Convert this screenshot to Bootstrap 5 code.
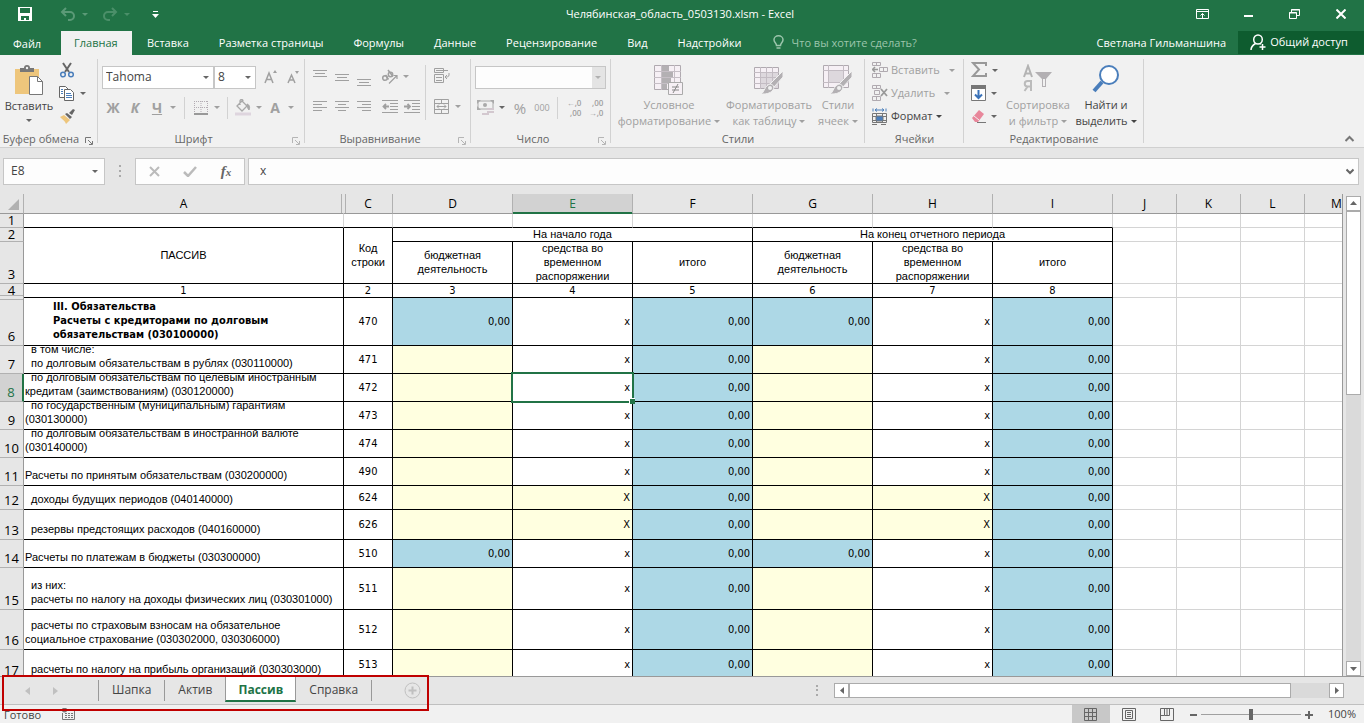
<!DOCTYPE html>
<html lang="ru">
<head>
<meta charset="utf-8">
<meta name="viewport" content="width=device-width, initial-scale=1">
<title>Челябинская_область_0503130.xlsm - Excel</title>
<link href="https://cdn.jsdelivr.net/npm/bootstrap@5.3.0/dist/css/bootstrap.min.css" rel="stylesheet">
<style>
:root{--xl:#217346;--line:#d4d4d4;--chrome:#e6e6e6;--rib:#f1f1f1}
body{font:11px/16px "Open Sans","Noto Sans",sans-serif;background:var(--chrome);color:#444;height:100vh;overflow:hidden}
button{border:0;background:none;padding:0;color:inherit;font:inherit}
svg{display:block;flex:none}
.titlebar{height:31px;background:var(--xl);color:#fff;padding-bottom:2px}
.quick{width:180px;padding-left:18px}
.winbtn{width:46px;height:28px;display:grid;place-items:center}
.menubar{background:var(--xl);height:24px;color:#fff}
.menubar .tab{color:#fff;text-decoration:none;padding:0 15px;line-height:24px;font-size:11px}
.menubar .tab.file{width:61px;padding:0 14px 0 13px;line-height:26px}
.menubar .tab.on{background:var(--rib);color:var(--xl);padding:0 13px;width:71px;white-space:nowrap}
.menubar input{background:none;border:0;outline:0;color:#fff;width:150px;font:inherit;padding:0}
.menubar input::placeholder{color:#9cc5ac;opacity:1}
.share{background:#0e5c2f;color:#fff;width:126px;height:23px}
.ribbon{background:var(--rib);height:93px;border-bottom:1px solid #d0d0d0}
.grp{position:relative;flex:none}
.grp::after{content:"";position:absolute;right:0;top:4px;height:84px;border-right:1px solid #d2d2d2}
.grp-name{height:16px;line-height:16px;text-align:center;color:#666;position:relative}
.grp-name button{position:absolute;right:5px;top:6px}
.w1{width:98px}.w2{width:207px}.w3{width:166px}.w4{width:140px}.w5{width:254px}.w6{width:99px}.w7{width:180px}
.body-row{height:76px}
.b{width:22px;height:22px;display:grid;place-items:center;flex:none}
.b26{width:26px}.b18{width:18px}
.dd{width:10px;height:22px;display:grid;place-items:center;flex:none;color:#666}
.off .dd,.titlebar .dd{color:inherit}
.dd::before,.car::after{content:"";border:3px solid transparent;border-top-color:currentColor;border-bottom:0;display:inline-block}
.car::after{margin-left:3px;vertical-align:2px}
.dark{color:#666!important}
.vs{width:12px;height:22px;flex:none;background:linear-gradient(#d2d2d2,#d2d2d2) center/1px 100% no-repeat}
.off{color:#a0a0a0}
.glyph{font-size:14px;font-weight:700;line-height:20px}
.dec{font-size:8px;line-height:10px;font-weight:600;text-align:right}
.big{text-align:center;padding-top:7px;white-space:nowrap;line-height:16px;height:76px}
.big svg{margin:0 auto 1px}
.sel{appearance:none;height:23px;border:1px solid #c6c6c6;border-radius:0;padding:0 0 0 3px;font:12px/20px "Open Sans",sans-serif;color:#444;background:#fff url("data:image/svg+xml,%3Csvg xmlns='http://www.w3.org/2000/svg' width='6' height='3'%3E%3Cpath d='M0 0h6L3 3z' fill='%23666'/%3E%3C/svg%3E") right 4px center no-repeat}
.sel:disabled{opacity:1;background:url("data:image/svg+xml,%3Csvg xmlns='http://www.w3.org/2000/svg' width='6' height='3'%3E%3Cpath d='M0 0h6L3 3z' fill='%23b0b0b0'/%3E%3C/svg%3E") right 4px center no-repeat,linear-gradient(#e4e4e4,#e4e4e4) right/13px 100% no-repeat,#fdfdfd}
.small-btn{height:23px;display:flex;align-items:center;gap:3px;white-space:nowrap}
.small-btn .car::after{margin-left:4px}
.fbar{height:46px;padding:10px 5px 9px 3px}
.fbox{background:#fdfdfd;border:1px solid #c6c6c6;height:27px}
.fbox input{border:0;outline:0;background:none;font:12px/20px "Open Sans",sans-serif;color:#444;min-width:0;padding:0}
.dots{margin-right:13px;margin-left:14px}
.sheetwrap{min-height:0}
.sheet{background:#fff;overflow:hidden;border-right:1px solid #999}
.cells{border-collapse:separate;border-spacing:0;table-layout:fixed;width:100%;min-width:1369px;color:#000;font:11px/14px "Liberation Sans",Arial,sans-serif}
.cells td{padding:0;border-right:1px solid var(--line);border-bottom:1px solid var(--line);white-space:nowrap;vertical-align:middle;text-align:center;font-size:11px;line-height:14px}
.cells thead th{height:20px;background:var(--chrome);border-right:1px solid #b1b1b1;border-bottom:1px solid #999;padding:2px 0 0;text-align:center;font:12px/16px "Open Sans",sans-serif;position:relative}
.cells thead th.cA{border-right-color:transparent}
.cells thead th.cC::before{content:"";position:absolute;left:-3px;width:5px;top:0;bottom:0;border:solid #b1b1b1;border-width:0 1px}
.cells thead th.on{background:#d2d2d2;color:var(--xl);border-bottom-color:var(--xl);box-shadow:inset 0 -1px var(--xl)}
.cells tbody th{background:var(--chrome);border-right:1px solid #999;border-bottom:1px solid #b1b1b1;padding:0;text-align:center;vertical-align:bottom;font:13px/13px "Open Sans",sans-serif;position:relative}
.cells tbody tr.tall th{padding-bottom:2px}
.cells tbody th.on{background:#d2d2d2;color:var(--xl);border-right:2px solid var(--xl)}
.cells .hid::before{content:"";position:absolute;left:0;right:0;top:-3px;height:5px;background:var(--chrome);border:solid #b1b1b1;border-width:1px 0}
.cells td.k{border-color:#000}
.cells td.u{border-bottom-color:#000}
.h14{height:14px}.h24{height:24px}.h28{height:28px}.h30{height:30px}.h40{height:40px}.h42{height:42px}.h48{height:48px}
.h14 td{line-height:13px}
.cells .n,.cells .r{font-family:"DejaVu Sans Condensed","DejaVu Sans",sans-serif}
.cells .r{text-align:right;padding-right:2px}
.tall .n,.tall .r{padding-top:2px}
.cells .bl{background:#add8e6}.cells .ye{background:#ffffe0}
.cells .txt{text-align:left}
.cells .two{line-height:14px}
.clip{overflow:hidden;display:flex;flex-direction:column;justify-content:flex-end;padding:0 0 3px 1px}
.clip.in{padding-left:7px}
.clip .ind{padding-left:6px}
.h24 .clip{height:23px}.h28 .clip{height:27px}.h30 .clip{height:29px}.h40 .clip{height:39px}.h42 .clip{height:41px}.h48 .clip{height:47px}
.clip.hd{padding:0;justify-content:center}
.clip.bold{font:bold 11px/14px "DejaVu Sans Condensed","DejaVu Sans",sans-serif;padding-left:29px}
.cells td.cur{position:relative}
.cur::before{content:"";position:absolute;left:-2px;top:-2px;right:-2px;bottom:-2px;border:2px solid var(--xl)}
.cur::after{content:"";position:absolute;right:-3px;bottom:-3px;width:6px;height:6px;background:var(--xl);border:solid #fff;border-width:1px 0 0 1px}
.vscroll{width:21px;padding:2px 3px 0 3px}
.sb{border:1px solid #ababab;background:#fff;width:15px;height:15px;display:grid;place-items:center;flex:none;color:#666}
.track{background:#dadada}
.thumb{background:#fff;border:1px solid #ababab}
.vthumb{height:41%}
.tabs{height:29px;border-top:1px solid #999;border-bottom:1px solid #c0c0c0;position:relative}
.tabs .st{font-size:12px;line-height:20px;color:#444;padding:0 13px;text-decoration:none;margin-top:3px;height:21px}
.tabs .bar{border-left:1px solid #999}
.tabs .on{background:#fff;color:var(--xl);font-weight:700;border:solid #999;border-width:0 1px;border-bottom:2px solid var(--xl);margin-top:-1px;height:26px;line-height:27px;width:71px;padding:0;text-align:center}
.mark-box{position:absolute;left:2px;top:-2px;width:427px;height:36px;border:2px solid #c00000;pointer-events:none}
.hscroll{width:510px;height:15px;margin:6px 20px 0 0}
.hthumb{width:92%}
.status{background:var(--rib);height:18px;color:#444}
.ready{width:62px;padding-left:4px;padding-top:2px}
.view{width:38px;display:grid;place-items:center;height:18px;color:#666}
.view.on{background:#c8c8c8}
.zoomer{appearance:none;width:100px;height:12px;background:linear-gradient(#a0a0a0,#a0a0a0) center/100% 1px no-repeat;margin:0}
.zoomer::-webkit-slider-thumb{appearance:none;width:4px;height:11px;background:#666}
</style>
</head>
<body class="d-flex flex-column">

<header class="titlebar d-flex align-items-center justify-content-between">
  <div class="quick d-flex align-items-center">
    <button aria-label="Сохранить"><svg width="14" height="14" viewBox="0 0 14 14"><path d="M0 0h14v14H0z" fill="#fff"/><path d="M2 1h10v5H2zM3 9h8v4H8v-2H6v2H3z" fill="#217346"/></svg></button>
    <button aria-label="Отменить" style="color:#5b9a77" class="d-flex align-items-center ms-4 ps-1"><svg width="16" height="14" fill="none" stroke="currentColor" stroke-width="2"><path d="M6 1L2 5l4 4M2 5h8a4 4 0 0 1 0 8H8"/></svg><span class="dd ms-1"></span></button>
    <button aria-label="Повторить" style="color:#4b8f69" class="d-flex align-items-center ms-2 ps-1"><svg width="16" height="14" fill="none" stroke="currentColor" stroke-width="2"><path d="M10 1l4 4-4 4M14 5H6a4 4 0 0 0 0 8h2"/></svg><span class="dd ms-1"></span></button>
    <button aria-label="Настройка" class="ms-3 ps-1"><svg width="7" height="7"><path d="M1 0h5v1H1zM0 3h7L3.500 7z" fill="#fff"/></svg></button>
  </div>
  <span class="text-nowrap">Челябинская_область_0503130.xlsm - Excel</span>
  <div class="d-flex">
    <button class="winbtn" aria-label="Параметры ленты"><svg width="13" height="10" fill="none" stroke="#fff"><path d="M.5.500h12v9H.5zM.5 2.500h12M6.500 9V4.500M4.500 6.500l2-2 2 2"/></svg></button>
    <button class="winbtn" aria-label="Свернуть"><svg width="10" height="8"><path d="M0 5h9v2H0z" fill="#fff"/></svg></button>
    <button class="winbtn" aria-label="Развернуть"><svg width="11" height="10" fill="none" stroke="#fff"><path d="M2.500 3V.5h8v6H8M2 1h9"/><path d="M.5 3.500h7v6h-7zM0 4h8"/></svg></button>
    <button class="winbtn" aria-label="Закрыть"><svg width="10" height="10" stroke="#fff" stroke-width="2"><path d="M.5.5l9 9M9.500.5l-9 9"/></svg></button>
  </div>
</header>

<nav class="menubar d-flex">
  <a href="#" class="tab file">Файл</a><a href="#" class="tab on">Главная</a><a href="#" class="tab">Вставка</a><a href="#" class="tab">Разметка страницы</a><a href="#" class="tab">Формулы</a><a href="#" class="tab">Данные</a><a href="#" class="tab">Рецензирование</a><a href="#" class="tab">Вид</a><a href="#" class="tab">Надстройки</a>
  <label class="d-flex align-items-center gap-2 ps-3"><svg width="11" height="15" fill="none" stroke="#9cc5ac" stroke-width="1.500"><path d="M3.500 10.500C3.500 8 1 7.500 1 4.800a4.500 4 0 0 1 9 0C10 7.500 7.500 8 7.500 10.500zM3.500 13h4"/></svg><input placeholder="Что вы хотите сделать?" aria-label="Что вы хотите сделать?"></label>
  <div class="ms-auto d-flex">
    <button class="me-2 pe-1 text-nowrap">Светлана Гильманшина</button>
    <button class="share d-flex align-items-center justify-content-center gap-1 pe-1 text-nowrap"><svg width="16" height="17" fill="none" stroke="#fff" stroke-width="1.500"><ellipse cx="8" cy="5.500" rx="4.300" ry="4.500"/><path d="M1 16c0-3 2-5 4.500-6.500M10 9.500l1 .7M12.500 10v6M9.500 13h6"/></svg>Общий доступ</button>
  </div>
</nav>

<section class="ribbon d-flex">
  <div class="grp w1">
    <div class="body-row d-flex">
      <button class="big" style="width:58px"><svg width="30" height="32"><path d="M1 4h24v25H1z" fill="#eec67c"/><path d="M6 7V3h4a3 3 0 0 1 6 0h4v4z" fill="#777"/><circle cx="13" cy="3" r="1.200" fill="#f1f1f1"/><path d="M15.500 11.500h8l5 5v13h-13z" fill="#fff" stroke="#777"/><path d="M23.500 11.500v5h5" fill="none" stroke="#777"/></svg>Вставить<span class="dd dark mx-auto" style="height:14px"></span></button>
      <div class="pt-1" style="padding-left:1px">
        <button class="small-btn" aria-label="Вырезать"><svg width="16" height="17" fill="none"><path d="M4 1l6 9M12 1L6 10" stroke="#666" stroke-width="2"/><circle cx="4" cy="12.500" r="2.300" stroke="#4a7ebb" stroke-width="1.500"/><circle cx="12" cy="12.500" r="2.300" stroke="#4a7ebb" stroke-width="1.500"/></svg></button>
        <button class="small-btn" aria-label="Копировать"><svg width="16" height="15" fill="#fff" stroke="#666"><path d="M.5.500h6l3 3v8h-9z"/><path d="M5.500 3.500h6l3 3v8h-9z"/><path d="M2 3.500h2M2 5.500h2M2 7.500h2M7 7.500h5M7 9.500h6M7 11.500h6" stroke="#4a7ebb"/></svg><span class="dd"></span></button>
        <button class="small-btn" aria-label="Формат по образцу"><svg width="16" height="15"><path d="M1 8l4-2 6 5-4 4c-1-3-3-4-6-7z" fill="#eec67c"/><path d="M6 5l2-1 5 4-2 2zM10 4l4-4 2 1-3 5z" fill="#666"/></svg></button>
      </div>
    </div>
    <div class="grp-name pe-3">Буфер обмена<button aria-label="Буфер обмена: параметры"><svg width="8" height="8" fill="none" stroke="#777"><path d="M.5 6V.5H6M3 3l4 4M7.500 4v3.500H4"/></svg></button></div>
  </div>

  <div class="grp w2">
    <div class="body-row ps-1">
      <div class="d-flex align-items-center" style="padding-top:11px">
        <select class="sel" style="width:112px" aria-label="Шрифт"><option>Tahoma</option></select><select class="sel" style="width:42px" aria-label="Размер"><option>8</option></select>
        <button class="b off ms-1" aria-label="Увеличить шрифт"><svg width="14" height="14" fill="none" stroke="currentColor" stroke-width="1.500"><path d="M1 13L5 3l4 10M2.500 9.500h5"/><path d="M9 3l2-3 2 3z" fill="currentColor" stroke="none"/></svg></button>
        <button class="b off" aria-label="Уменьшить шрифт"><svg width="14" height="14" fill="none" stroke="currentColor" stroke-width="1.500"><path d="M2 13l3.500-8L9 13M3.500 10h4"/><path d="M9 1h4l-2 3z" fill="currentColor" stroke="none"/></svg></button>
      </div>
      <div class="d-flex align-items-center off pt-2">
        <button class="b glyph">Ж</button><button class="b glyph fst-italic">К</button><button class="b glyph text-decoration-underline">Ч</button><span class="dd"></span><span class="vs"></span>
        <button class="b" aria-label="Границы"><svg width="14" height="14" fill="none" stroke="#b3acb3"><path d="M.5 0v12M13.500 0v12M7 0v12M0 .5h14M0 6.500h14" stroke-dasharray="1 1"/><path d="M0 13h14" stroke="#999" stroke-width="2"/></svg></button><span class="dd"></span><span class="vs" style="width:10px"></span>
        <button class="b" aria-label="Заливка"><svg width="16" height="17" fill="none" stroke="#a8a8a8"><path d="M2 7l5-5 5 5-5 5zM5 6V2a1.500 1.500 0 0 1 3 0" stroke-width="1.300"/><path d="M12 5c3 1 3 4 2 6-1-1-2-3-2-6z" fill="#a8a8a8"/><path d="M0 15h16" stroke="#ded5de" stroke-width="3"/></svg></button><span class="dd"></span>
        <button class="b glyph">А</button><span class="dd"></span>
      </div>
    </div>
    <div class="grp-name pe-3">Шрифт<button aria-label="Шрифт: параметры"><svg width="8" height="8" fill="none" stroke="#b5b5b5"><path d="M.5 6V.5H6M3 3l4 4M7.500 4v3.500H4"/></svg></button></div>
  </div>

  <div class="grp w3">
    <div class="body-row d-flex off ps-1">
      <div>
        <div class="d-flex" style="padding-top:11px">
          <button class="b" aria-label="По верхнему краю"><svg width="14" height="18" stroke="currentColor"><path d="M0 2.500h14M2 5.500h10M0 8.500h14" /></svg></button>
          <button class="b" aria-label="По середине"><svg width="14" height="18" stroke="currentColor"><path d="M0 6.500h14M2 9.500h10M0 12.500h14"/></svg></button>
          <button class="b" aria-label="По нижнему краю"><svg width="14" height="18" stroke="currentColor"><path d="M0 11.500h14M2 14.500h10M0 17.500h14"/></svg></button>
          <button class="b ms-1" aria-label="Ориентация"><svg width="18" height="16" fill="none" stroke="currentColor" stroke-width="1.500"><circle cx="4" cy="9" r="2.300"/><path d="M4.500 6l3 4.500M7 1l5 6.500"/><circle cx="9.500" cy="5.500" r="2.200"/><path d="M8 14.500l8-8M12.500 6.500H16V10" stroke-width="1.200"/></svg></button><span class="dd"></span>
        </div>
        <div class="d-flex pt-2">
          <button class="b" aria-label="По левому краю"><svg width="14" height="12" stroke="currentColor"><path d="M0 .5h14M0 3.500h9M0 6.500h14M0 9.500h9"/></svg></button>
          <button class="b" aria-label="По центру"><svg width="14" height="12" stroke="currentColor"><path d="M0 .5h14M3 3.500h8M0 6.500h14M3 9.500h8"/></svg></button>
          <button class="b" aria-label="По правому краю"><svg width="14" height="12" stroke="currentColor"><path d="M0 .5h14M5 3.500h9M0 6.500h14M5 9.500h9"/></svg></button>
          <button class="b ms-1" aria-label="Уменьшить отступ"><svg width="16" height="13" stroke="currentColor"><path d="M0 .5h16M8 3.500h8M8 6.500h8M8 9.500h8M0 12.500h16"/><path d="M2 6.500h5M4 4L1.500 6.500 4 9" fill="none" stroke-width="1.800"/></svg></button>
          <button class="b" aria-label="Увеличить отступ"><svg width="16" height="13" stroke="currentColor"><path d="M0 .5h16M8 3.500h8M8 6.500h8M8 9.500h8M0 12.500h16"/><path d="M0 6.500h5M3.500 4L6 6.500 3.500 9" fill="none" stroke-width="1.800"/></svg></button>
        </div>
      </div>
      <span class="vs" style="width:4px;height:55px;margin-top:10px"></span>
      <div class="ps-1">
        <button class="b" style="margin-top:10px" aria-label="Перенести текст"><svg width="16" height="16" fill="none" stroke="currentColor"><path d="M.5.500h9v4h-9zM2 2.500h12M.5 6.500h9v8h-9zM2 9.500h6M2 12.500h6M15 5v2c0 2-2 2-4 2M13 7l-2 2 2 2"/></svg></button>
        <div class="d-flex" style="padding-top:9px"><button class="b" aria-label="Объединить"><svg width="16" height="15" fill="none" stroke="currentColor"><path d="M.5.500h14v14H.5zM.5 4.500h14M.5 10.500h14M7.500.5v4M7.500 10.500v4M3 7.500h9M5 5.500l-2 2 2 2M10 5.500l2 2-2 2"/></svg></button><span class="dd"></span></div>
      </div>
    </div>
    <div class="grp-name pe-3">Выравнивание<button aria-label="Выравнивание: параметры"><svg width="8" height="8" fill="none" stroke="#b5b5b5"><path d="M.5 6V.5H6M3 3l4 4M7.500 4v3.500H4"/></svg></button></div>
  </div>

  <div class="grp w4">
    <div class="body-row off ps-1">
      <div style="padding-top:11px"><select class="sel d-block" style="width:131px" disabled aria-label="Числовой формат"><option></option></select></div>
      <div class="d-flex align-items-center pt-2">
        <button class="b" aria-label="Денежный формат"><svg width="18" height="16"><path d="M1 1h15v8H1z" fill="none" stroke="#aaa"/><circle cx="8" cy="5" r="2" fill="#aaa"/><path d="M0 0h4L0 4zM17 0h-4l4 4zM0 10h4L0 6z" fill="#aaa"/><path d="M10 8h7v2h-7zM10 11h7v2h-7zM5 13h7v2H5z" fill="#d3c8cf"/></svg></button><span class="dd dark"></span>
        <button class="b b26" style="font-size:15px">%</button><button class="b b18" style="font-size:9px">000</button><span class="vs"></span>
        <button class="b dec"><span>←,0<br>,00</span></button><button class="b dec"><span>,00<br>→,0</span></button>
      </div>
    </div>
    <div class="grp-name pe-3">Число<button aria-label="Число: параметры"><svg width="8" height="8" fill="none" stroke="#b5b5b5"><path d="M.5 6V.5H6M3 3l4 4M7.500 4v3.500H4"/></svg></button></div>
  </div>

  <div class="grp w5">
    <div class="body-row d-flex off ps-1">
      <button class="big" style="width:108px"><svg width="30" height="32"><path d="M.5 1.500h26v24H.5z" fill="#f6f0f5" stroke="#b0aab0"/><path d="M0 7.500h27M0 13.500h27M0 19.500h27M7.500 1v25M20.500 1v25" stroke="#c6bfc6"/><path d="M8 2h7v5H8zM8 8h11v5H8zM8 14h9v5H8zM8 20h5v5H8z" fill="#b3b0b3"/><path d="M14.500 18.500h14v12h-14z" fill="#f6f0f5" stroke="#aaa"/><path d="M18 23h7M18 26h7M24 20l-5 9" stroke="#888"/></svg>Условное<br><span class="car">форматирование</span></button>
      <button class="big" style="width:92px"><svg width="30" height="32"><path d="M.5 3.500h24v21H.5z" fill="#f6f0f5" stroke="#b0aab0"/><path d="M7 9h17v15H7z" fill="#ddd8dd"/><path d="M0 8.500h25M0 13.500h25M0 19.500h25M6.500 3v22M12.500 3v22M18.500 3v22" stroke="#c3bcc3"/><path d="M29 7v6l-9 10-4-3z" fill="#b3b0b3" stroke="#f1f1f1"/><path d="M16 20c3 0 5 3 3 6-3 4-8 4-12 4 4-2 3-8 9-10z" fill="#b3b0b3" stroke="#f1f1f1"/><circle cx="16" cy="24" r="2" fill="#f1f1f1"/></svg>Форматировать<br><span class="car">как таблицу</span></button>
      <button class="big" style="width:46px"><svg width="30" height="32"><path d="M.5 1.500h25v22H.5z" fill="#f6f0f5" stroke="#b0aab0"/><path d="M6 7h14v11H6z" fill="#ddd8dd"/><path d="M0 6.500h26M0 18.500h26M5.500 1v23M20.500 1v23" stroke="#c3bcc3"/><path d="M29 7v6l-9 10-4-3z" fill="#b3b0b3" stroke="#f1f1f1"/><path d="M16 20c3 0 5 3 3 6-3 4-8 4-12 4 4-2 3-8 9-10z" fill="#b3b0b3" stroke="#f1f1f1"/><circle cx="16" cy="24" r="2" fill="#f1f1f1"/></svg>Стили<br><span class="car">ячеек</span></button>
    </div>
    <div class="grp-name">Стили</div>
  </div>

  <div class="grp w6">
    <div class="body-row pt-1 off" style="padding-left:7px">
      <button class="small-btn"><svg width="16" height="16" fill="none" stroke="#b0aab0"><path d="M.5.500h8v3h-8zM4.500 0v4M.5 11.500h8v4h-8zM4.500 11v5M7.500 5.500h8v4h-8zM11.500 5v5"/><path d="M6 7.500H0M3 5L.5 7.500 3 10" stroke="#999" stroke-width="1.500"/></svg><span>Вставить</span><span class="dd ms-1"></span></button>
      <button class="small-btn"><svg width="16" height="16" fill="none" stroke="#b0aab0"><path d="M.5.500h8v3h-8zM4.500 0v4M.5 11.500h8v4h-8zM4.500 11v5M2.500 5.500h5v4h-5z"/><path d="M9 4l6 7M15 4l-6 7" stroke="#999" stroke-width="1.800"/></svg><span>Удалить</span><span class="dd ms-1"></span></button>
      <button class="small-btn" style="color:#444"><svg width="16" height="17" fill="none" stroke="#777"><path d="M.5 5.500h14v9H.5zM4.500 5v10M10.500 5v10M0 8.500h15M0 12.500h15M0 16.500h5M9 16.500h5"/><path d="M4 8h7v5H4z" fill="#4a7ebb"/><path d="M1 .5v3M14 .5v3M3 2h9M5 .5L3 2l2 1.500M10 .5L12 2l-2 1.500" stroke="#4a7ebb"/></svg><span class="car">Формат</span></button>
    </div>
    <div class="grp-name">Ячейки</div>
  </div>

  <div class="grp w7">
    <div class="body-row d-flex" style="padding-left:7px">
      <div class="pt-1" style="width:32px">
        <button class="small-btn" aria-label="Сумма"><svg width="16" height="16" fill="none" stroke="#999" stroke-width="2"><path d="M15 4V1H2l6 6.500L2 14h13v-3"/></svg><span class="dd"></span></button>
        <button class="small-btn" aria-label="Заполнить"><svg width="15" height="16" fill="#fff" stroke="#777"><path d="M.5.500h14v15H.5z"/><path d="M0 2h15" stroke-width="4"/><path d="M7.500 5v8M4 9.500L7.500 13 11 9.500" fill="none" stroke="#3b73b9" stroke-width="2"/></svg><span class="dd"></span></button>
        <button class="small-btn" aria-label="Очистить"><svg width="15" height="14"><path d="M1 9l7-8 5 4-6 8H4z" fill="#e8879b"/><path d="M3 7l5 4" stroke="#f1f1f1"/><path d="M6 13.500h9" stroke="#777"/></svg><span class="dd"></span></button>
      </div>
      <button class="big off" style="width:70px"><svg width="30" height="32" fill="none"><path d="M1 13L5 2l4 11M2 9.500h6" stroke="#b3b3b3" stroke-width="2"/><path d="M8 27V17H4.500a2.700 2.700 0 0 0 0 5.500H8M5 22l-3.500 5" stroke="#bbb" stroke-width="2"/><path d="M12 8h17l-6 7v8h-4v-8z" fill="#b3b0b3"/><path d="M20 15h2v7h-2z" fill="#f1f1f1"/></svg>Сортировка<br><span class="car">и фильтр</span></button>
      <button class="big" style="width:66px"><svg width="30" height="32" fill="none"><path d="M11 18L3 27" stroke="#4a7ebb" stroke-width="4"/><circle cx="18" cy="11" r="9" fill="#fff" stroke="#4a7ebb" stroke-width="2"/></svg>Найти и<br><span class="car">выделить</span></button>
    </div>
    <div class="grp-name">Редактирование</div>
  </div>
  <button class="ms-auto me-2 mt-auto mb-1" aria-label="Свернуть ленту"><svg width="11" height="8" fill="none" stroke="#777" stroke-width="2"><path d="M.5 6l4-4 4 4"/></svg></button>
</section>

<section class="fbar d-flex">
  <div class="fbox d-flex align-items-center" style="width:102px;padding-left:7px"><input class="flex-grow-1 w-75" value="E8" aria-label="Имя"><span class="dd me-1"></span></div>
  <svg class="dots" width="2" height="27" fill="#aaa"><path d="M0 7h2v2H0zM0 12h2v2H0zM0 17h2v2H0z"/></svg>
  <div class="fbox d-flex align-items-center justify-content-around" style="width:110px;margin-left:1px">
    <button class="b" aria-label="Отмена"><svg width="11" height="11" stroke="#bbb" stroke-width="2"><path d="M1 1l9 9M10 1l-9 9"/></svg></button>
    <button class="b" aria-label="Ввод"><svg width="14" height="11" fill="none" stroke="#bbb" stroke-width="2.500"><path d="M1 6l4 4 8-9"/></svg></button>
    <button class="b" aria-label="Вставить функцию" style="font:italic bold 15px/20px 'Liberation Serif',serif;color:#666"><span>f<small style="font-size:11px">x</small></span></button>
  </div>
  <div class="fbox d-flex align-items-center flex-grow-1 pe-1" style="margin-left:3px;padding-left:11px"><input class="flex-grow-1" value="x" aria-label="Строка формул"><svg width="8" height="7" fill="none" stroke="#666" stroke-width="2"><path d="M.5 1.500L4 5l3.500-3.500"/></svg></div>
</section>

<main class="sheetwrap d-flex flex-grow-1">
<div class="sheet flex-grow-1">
<table class="cells">
<colgroup><col style="width:24px"><col style="width:320px"><col style="width:49px"><col style="width:120px"><col style="width:120px"><col style="width:120px"><col style="width:120px"><col style="width:120px"><col style="width:120px"><col style="width:64px"><col style="width:64px"><col style="width:64px"><col style="width:64px"><col></colgroup>
<thead><tr><th><svg class="ms-auto me-1" width="11" height="11"><path d="M11 0v11H0z" fill="#b1b1b1"/></svg></th><th class="cA">A</th><th class="cC">C</th><th>D</th><th class="on">E</th><th>F</th><th>G</th><th>H</th><th>I</th><th>J</th><th>K</th><th>L</th><th>M</th><th></th></tr></thead>
<tbody>
<tr class="h14"><th>1</th><td class="u"></td><td class="u"></td><td class="u"></td><td class="u"></td><td class="u"></td><td class="u"></td><td class="u"></td><td class="u"></td><td></td><td></td><td></td><td></td><td></td></tr>
<tr class="h14"><th>2</th><td class="k" rowspan="2">ПАССИВ</td><td class="k two" rowspan="2">Код<br>строки</td><td class="k" colspan="3">На начало года</td><td class="k" colspan="3">На конец отчетного периода</td><td></td><td></td><td></td><td></td><td></td></tr>
<tr class="h42 tall"><th>3</th><td class="k">бюджетная<br>деятельность</td><td class="k"><div class="clip hd"><span>средства во<br>временном<br>распоряжении</span></div></td><td class="k">итого</td><td class="k">бюджетная<br>деятельность</td><td class="k"><div class="clip hd"><span>средства во<br>временном<br>распоряжении</span></div></td><td class="k">итого</td><td></td><td></td><td></td><td></td><td></td></tr>
<tr class="h14"><th>4</th><td class="k n">1</td><td class="k n">2</td><td class="k n">3</td><td class="k n">4</td><td class="k n">5</td><td class="k n">6</td><td class="k n">7</td><td class="k n">8</td><td></td><td></td><td></td><td></td><td></td></tr>
<tr class="h48 tall"><th class="hid">6</th><td class="k txt"><div class="clip bold"><span>III. Обязательства</span><span>Расчеты с кредиторами по долговым</span><span>обязательствам (030100000)</span></div></td><td class="k n">470</td><td class="k r bl">0,00</td><td class="k r">x</td><td class="k r bl">0,00</td><td class="k r bl">0,00</td><td class="k r">x</td><td class="k r bl">0,00</td><td></td><td></td><td></td><td></td><td></td></tr>
<tr class="h28 tall"><th>7</th><td class="k txt"><div class="clip in"><span>в том числе:</span><span>по долговым обязательствам в рублях (030110000)</span></div></td><td class="k n">471</td><td class="k r ye"></td><td class="k r">x</td><td class="k r bl">0,00</td><td class="k r ye"></td><td class="k r">x</td><td class="k r bl">0,00</td><td></td><td></td><td></td><td></td><td></td></tr>
<tr class="h28 tall"><th class="on">8</th><td class="k txt"><div class="clip"><span class="ind">по долговым обязательствам по целевым иностранным</span><span>кредитам (заимствованиям) (030120000)</span></div></td><td class="k n">472</td><td class="k r ye"></td><td class="k r cur">x</td><td class="k r bl">0,00</td><td class="k r ye"></td><td class="k r">x</td><td class="k r bl">0,00</td><td></td><td></td><td></td><td></td><td></td></tr>
<tr class="h28 tall"><th>9</th><td class="k txt"><div class="clip"><span class="ind">по государственным (муниципальным) гарантиям</span><span>(030130000)</span></div></td><td class="k n">473</td><td class="k r ye"></td><td class="k r">x</td><td class="k r bl">0,00</td><td class="k r ye"></td><td class="k r">x</td><td class="k r bl">0,00</td><td></td><td></td><td></td><td></td><td></td></tr>
<tr class="h28 tall"><th>10</th><td class="k txt"><div class="clip"><span class="ind">по долговым обязательствам в иностранной валюте</span><span>(030140000)</span></div></td><td class="k n">474</td><td class="k r ye"></td><td class="k r">x</td><td class="k r bl">0,00</td><td class="k r ye"></td><td class="k r">x</td><td class="k r bl">0,00</td><td></td><td></td><td></td><td></td><td></td></tr>
<tr class="h28 tall"><th>11</th><td class="k txt"><div class="clip"><span>Расчеты по принятым обязательствам (030200000)</span></div></td><td class="k n">490</td><td class="k r ye"></td><td class="k r">x</td><td class="k r bl">0,00</td><td class="k r ye"></td><td class="k r">x</td><td class="k r bl">0,00</td><td></td><td></td><td></td><td></td><td></td></tr>
<tr class="h24 tall"><th>12</th><td class="k txt"><div class="clip in"><span>доходы будущих периодов (040140000)</span></div></td><td class="k n">624</td><td class="k r ye"></td><td class="k r ye">X</td><td class="k r bl">0,00</td><td class="k r ye"></td><td class="k r ye">X</td><td class="k r bl">0,00</td><td></td><td></td><td></td><td></td><td></td></tr>
<tr class="h30 tall"><th>13</th><td class="k txt"><div class="clip in"><span>резервы предстоящих расходов (040160000)</span></div></td><td class="k n">626</td><td class="k r ye"></td><td class="k r ye">X</td><td class="k r bl">0,00</td><td class="k r ye"></td><td class="k r ye">X</td><td class="k r bl">0,00</td><td></td><td></td><td></td><td></td><td></td></tr>
<tr class="h28 tall"><th>14</th><td class="k txt"><div class="clip"><span>Расчеты по платежам в бюджеты (030300000)</span></div></td><td class="k n">510</td><td class="k r bl">0,00</td><td class="k r">x</td><td class="k r bl">0,00</td><td class="k r bl">0,00</td><td class="k r">x</td><td class="k r bl">0,00</td><td></td><td></td><td></td><td></td><td></td></tr>
<tr class="h42 tall"><th>15</th><td class="k txt"><div class="clip in"><span>из них:</span><span>расчеты по налогу на доходы физических лиц (030301000)</span></div></td><td class="k n">511</td><td class="k r ye"></td><td class="k r">x</td><td class="k r bl">0,00</td><td class="k r ye"></td><td class="k r">x</td><td class="k r bl">0,00</td><td></td><td></td><td></td><td></td><td></td></tr>
<tr class="h40 tall"><th>16</th><td class="k txt"><div class="clip"><span class="ind">расчеты по страховым взносам на обязательное</span><span>социальное страхование (030302000, 030306000)</span></div></td><td class="k n">512</td><td class="k r ye"></td><td class="k r">x</td><td class="k r bl">0,00</td><td class="k r ye"></td><td class="k r">x</td><td class="k r bl">0,00</td><td></td><td></td><td></td><td></td><td></td></tr>
<tr class="h30 tall"><th>17</th><td class="k txt"><div class="clip in"><span>расчеты по налогу на прибыль организаций (030303000)</span></div></td><td class="k n">513</td><td class="k r ye"></td><td class="k r">x</td><td class="k r bl">0,00</td><td class="k r ye"></td><td class="k r">x</td><td class="k r bl">0,00</td><td></td><td></td><td></td><td></td><td></td></tr>
</tbody>
</table>
</div>
<div class="vscroll d-flex flex-column">
  <button class="sb" aria-label="Вверх"><svg width="7" height="4"><path d="M0 4h7L3.500 0z" fill="#666"/></svg></button>
  <div class="track flex-grow-1"><div class="thumb vthumb"></div></div>
  <button class="sb" aria-label="Вниз"><svg width="7" height="4"><path d="M0 0h7L3.500 4z" fill="#666"/></svg></button>
</div>
</main>

<nav class="tabs d-flex">
  <div class="d-flex align-items-center" style="width:98px;padding-left:25px;gap:23px">
    <button aria-label="Предыдущий лист"><svg width="5" height="8"><path d="M5 0v8L0 4z" fill="#c0c0c0"/></svg></button><button aria-label="Следующий лист"><svg width="5" height="8"><path d="M0 0v8l5-4z" fill="#c0c0c0"/></svg></button>
  </div>
  <a href="#" class="st bar">Шапка</a><a href="#" class="st bar">Актив</a><a href="#" class="st on">Пассив</a><a href="#" class="st">Справка</a><span class="st bar" style="width:33px;padding:0"></span>
  <button aria-label="Новый лист"><svg width="17" height="17" fill="none" stroke="#c0c0c0"><circle cx="8.500" cy="8.500" r="7.500"/><path d="M8.500 4.500v8M4.500 8.500h8" stroke-width="2"/></svg></button>
  <svg class="ms-auto me-3" width="2" height="27" fill="#aaa"><path d="M0 8h2v2H0zM0 12h2v2H0zM0 17h2v2H0z"/></svg>
  <div class="hscroll d-flex">
    <button class="sb" aria-label="Влево"><svg width="4" height="7"><path d="M4 0v7L0 3.500z" fill="#666"/></svg></button>
    <div class="track flex-grow-1 d-flex"><div class="thumb hthumb"></div></div>
    <button class="sb" aria-label="Вправо"><svg width="4" height="7"><path d="M0 0v7l4-3.500z" fill="#666"/></svg></button>
  </div>
  <div class="mark-box"></div>
</nav>

<footer class="status d-flex align-items-center">
  <span class="ready">Готово</span>
  <button aria-label="Запись макроса"><svg width="13" height="12" fill="none" stroke="#777"><path d="M5 2.500h7.500v9H.5V5M3 5.500h2M6 5.500h2M9 5.500h2M3 7.500h2M6 7.500h2M9 7.500h2M3 9.500h2M6 9.500h2M9 9.500h2"/><circle cx="2.500" cy="2" r="2.500" fill="#777" stroke="none"/></svg></button>
  <div class="ms-auto d-flex align-items-center">
    <button class="view on" aria-label="Обычный"><svg width="14" height="13" fill="none" stroke="currentColor"><path d="M.5.500h12v12H.5zM.5 4.500h12M.5 8.500h12M4.500.5v12M8.500.5v12"/></svg></button>
    <button class="view" aria-label="Разметка страницы"><svg width="14" height="13" fill="none" stroke="currentColor"><path d="M.5.500h13v12H.5zM3.500 2.500h7v8h-7zM5 4.500h4M5 6.500h4M5 8.500h4"/></svg></button>
    <button class="view" aria-label="Страничный"><svg width="14" height="13" fill="none" stroke="currentColor"><path d="M.5.500h13v12H.5zM4.500.5v7h5v-7M4.500 7.500H.5M7 .5v7"/></svg></button>
    <button class="ms-1" aria-label="Уменьшить"><svg width="7" height="9"><path d="M0 4h7v2H0z" fill="#666"/></svg></button>
    <input type="range" class="zoomer ms-1" aria-label="Масштаб">
    <button class="ms-1" aria-label="Увеличить"><svg width="8" height="9"><path d="M0 4h8v2H0zM3 1h2v8H3z" fill="#666"/></svg></button>
    <span class="text-end" style="width:43px;margin-right:8px">100%</span>
  </div>
</footer>
<script src="https://cdn.jsdelivr.net/npm/bootstrap@5.3.0/dist/js/bootstrap.bundle.min.js"></script>
</body>
</html>
